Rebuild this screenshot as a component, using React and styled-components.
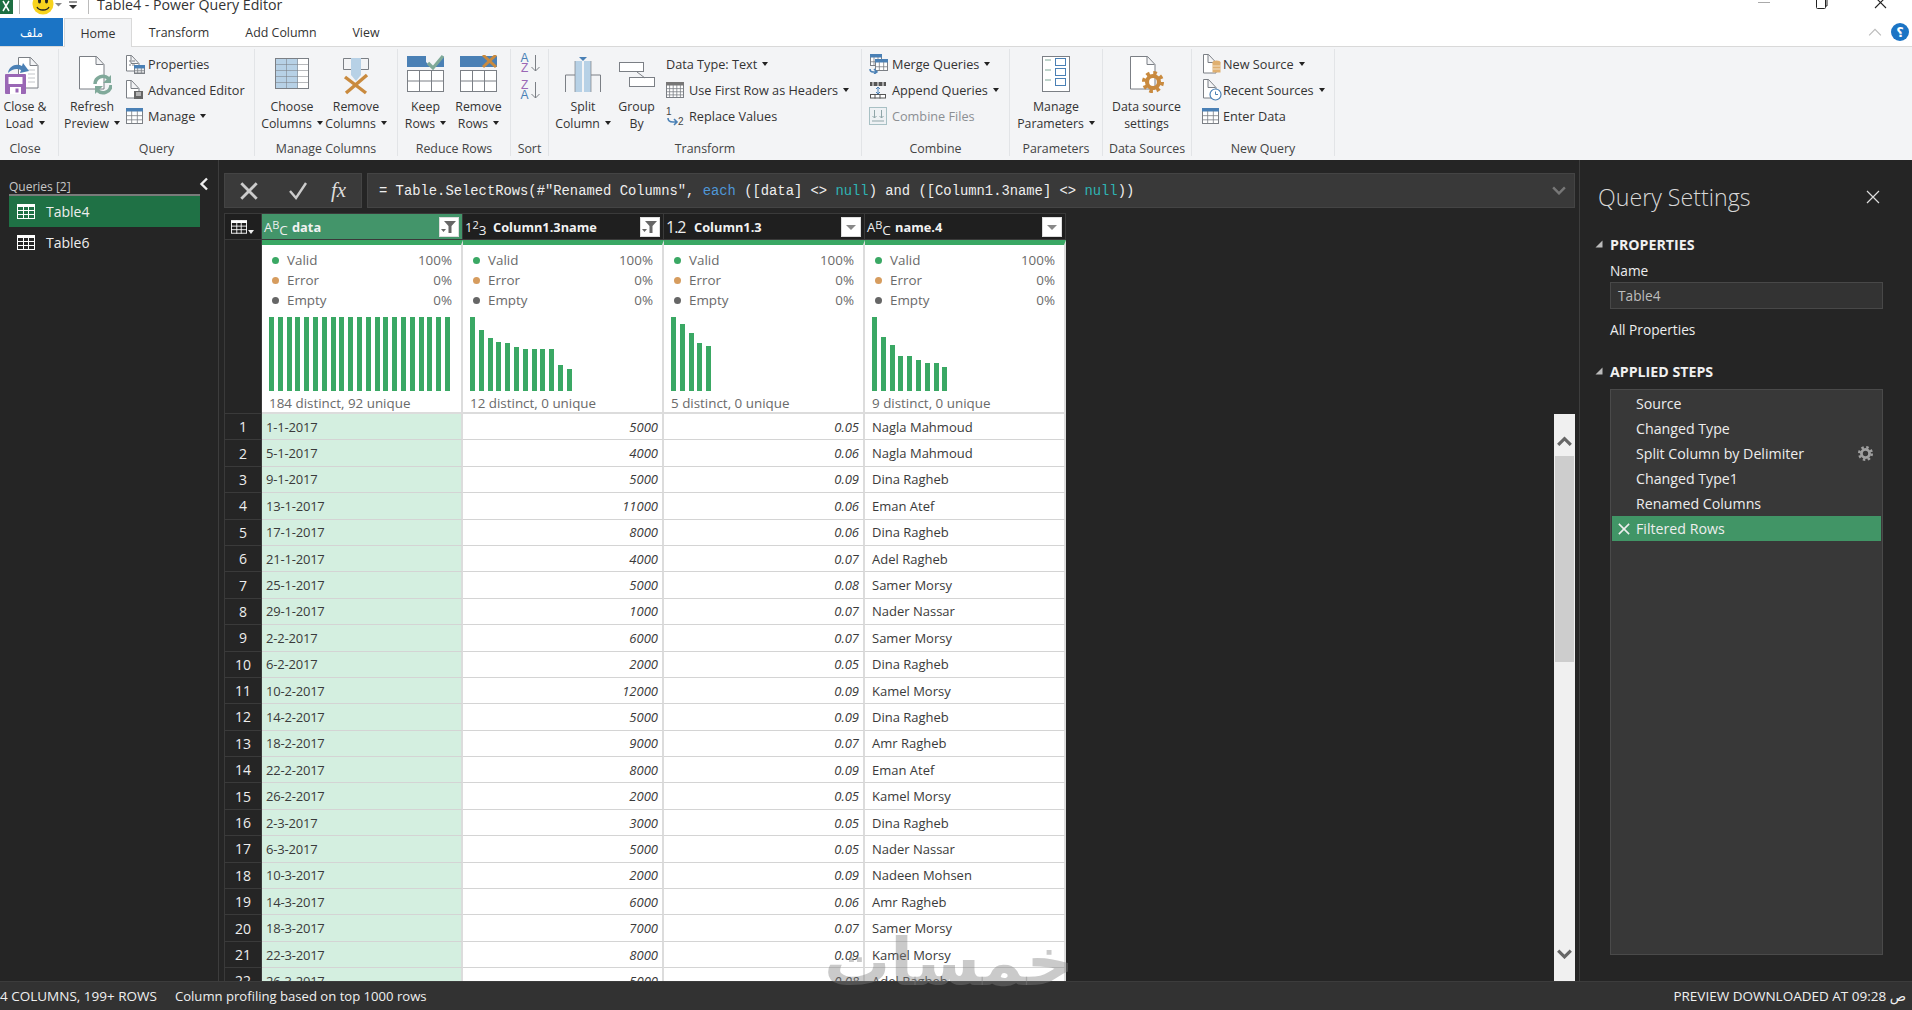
import React from "react";
import styled, { createGlobalStyle } from "styled-components";

const UI = `"Open Sans", "DejaVu Sans", sans-serif`;

const GlobalStyle = createGlobalStyle`
  html, body {
    margin: 0;
    padding: 0;
    background: #252525;
    overflow: hidden;
  }
  * { box-sizing: border-box; }
`;

const rows = [
  ["1-1-2017", 5000, "0.05", "Nagla Mahmoud"],
  ["5-1-2017", 4000, "0.06", "Nagla Mahmoud"],
  ["9-1-2017", 5000, "0.09", "Dina Ragheb"],
  ["13-1-2017", 11000, "0.06", "Eman Atef"],
  ["17-1-2017", 8000, "0.06", "Dina Ragheb"],
  ["21-1-2017", 4000, "0.07", "Adel Ragheb"],
  ["25-1-2017", 5000, "0.08", "Samer Morsy"],
  ["29-1-2017", 1000, "0.07", "Nader Nassar"],
  ["2-2-2017", 6000, "0.07", "Samer Morsy"],
  ["6-2-2017", 2000, "0.05", "Dina Ragheb"],
  ["10-2-2017", 12000, "0.09", "Kamel Morsy"],
  ["14-2-2017", 5000, "0.09", "Dina Ragheb"],
  ["18-2-2017", 9000, "0.07", "Amr Ragheb"],
  ["22-2-2017", 8000, "0.09", "Eman Atef"],
  ["26-2-2017", 2000, "0.05", "Kamel Morsy"],
  ["2-3-2017", 3000, "0.05", "Dina Ragheb"],
  ["6-3-2017", 5000, "0.05", "Nader Nassar"],
  ["10-3-2017", 2000, "0.09", "Nadeen Mohsen"],
  ["14-3-2017", 6000, "0.06", "Amr Ragheb"],
  ["18-3-2017", 7000, "0.07", "Samer Morsy"],
  ["22-3-2017", 8000, "0.09", "Kamel Morsy"],
  ["26-3-2017", 5000, "0.08", "Adel Ragheb"],
];

const columns = [
  { name: "data", type: "abc", filtered: true, active: true, distinct: "184 distinct, 92 unique", bars: Array(21).fill(74) },
  { name: "Column1.3name", type: "123", filtered: true, distinct: "12 distinct, 0 unique", bars: [74, 61, 53, 49, 48, 44, 42, 42, 42, 42, 26, 22] },
  { name: "Column1.3", type: "1.2", distinct: "5 distinct, 0 unique", bars: [74, 67, 58, 48, 45] },
  { name: "name.4", type: "abc", distinct: "9 distinct, 0 unique", bars: [74, 54, 46, 35, 35, 31, 28, 28, 24] },
];

const steps = ["Source", "Changed Type", "Split Column by Delimiter", "Changed Type1", "Renamed Columns", "Filtered Rows"];

/* ---------- layout ---------- */

const Page = styled.div`
  position: relative;
  width: 1912px;
  height: 1010px;
  display: grid;
  grid-template-rows: 18px 29px 113px 821px 29px;
  font-family: ${UI};
  overflow: hidden;
`;

const TitleBar = styled.div`
  background: #fff;
  display: flex;
  align-items: center;
  overflow: hidden;
  height: 18px;
`;
const TitleText = styled.div`
  font-size: 14.2px;
  line-height: 18px;
  color: #333;
  margin: -8px 0 0 8px;
  white-space: nowrap;
`;
const TitleRule = styled.div`
  width: 1px;
  height: 14px;
  background: #bbb;
  margin: -4px 0 0 ${(p) => p.$left}px;
`;
const TitleSvg = styled.svg`
  flex: none;
  margin: ${(p) => p.$margin || 0};
`;
const WindowButtons = styled.div`
  margin-left: auto;
  display: flex;
  align-self: flex-start;
  gap: 46px;
  padding-right: 25px;
`;

const TabRow = styled.div`
  background: #fff;
  display: flex;
  align-items: stretch;
  border-bottom: 1px solid #d9d9d9;
`;
const FileTab = styled.div`
  width: 63px;
  background: #1b74c5;
  color: #fff;
  font-size: 12px;
  display: flex;
  align-items: center;
  justify-content: center;
`;
const Tab = styled.div`
  width: ${(p) => p.$w}px;
  font-size: 12.4px;
  color: #333;
  display: flex;
  align-items: center;
  justify-content: center;
  ${(p) =>
    p.$active &&
    `background:#f3f4f6;margin:0 0 -1px 1px;border:1px solid #d9d9d9;border-bottom:0;`}
`;
const TabRight = styled.div`
  margin-left: auto;
  display: flex;
  align-items: center;
  gap: 9px;
  padding-right: 3px;
`;
const HelpBadge = styled.div`
  width: 18px;
  height: 18px;
  border-radius: 50%;
  background: #1b74c5;
  color: #fff;
  font-size: 13px;
  font-weight: 700;
  line-height: 18px;
  text-align: center;
`;

const Ribbon = styled.div`
  background: #f3f4f6;
  display: flex;
  align-items: flex-start;
  padding-top: 2px;
`;
const Group = styled.div`
  width: ${(p) => p.$w}px;
  height: 107px;
  border-right: 1px solid #e2e4e7;
  display: flex;
  flex-direction: column;
`;
const GroupBody = styled.div`
  height: 92px;
  display: flex;
  align-items: flex-start;
  gap: ${(p) => p.$gap || 0}px;
  padding-left: ${(p) => p.$pad || 0}px;
`;
const GroupLabel = styled.div`
  height: 15px;
  width: ${(p) => (p.$w ? `${p.$w}px` : "auto")};
  line-height: 15px;
  font-size: 12.4px;
  color: #444;
  text-align: center;
  white-space: nowrap;
`;
const LargeButton = styled.div`
  width: ${(p) => p.$w}px;
  display: flex;
  flex-direction: column;
  align-items: center;
  padding-top: 6px;
`;
const LargeIcon = styled.div`
  height: 43px;
  display: flex;
  align-items: flex-start;
  justify-content: center;
`;
const LargeText = styled.div`
  font-size: 12.3px;
  line-height: 17px;
  color: #333;
  text-align: center;
  white-space: nowrap;
`;
const Stack = styled.div`
  padding-top: ${(p) => p.$top ?? 2}px;
  margin-left: ${(p) => p.$left || 0}px;
`;
const SmallButton = styled.div`
  height: 26.2px;
  display: flex;
  align-items: center;
  font-size: 12.7px;
  white-space: nowrap;
  color: ${(p) => (p.$disabled ? "#8b8f93" : "#333")};
`;
const SmallIcon = styled.div`
  width: ${(p) => p.$w}px;
  display: flex;
  align-items: center;
`;
const Caret = styled.span`
  display: inline-block;
  width: 0;
  height: 0;
  margin-left: 5px;
  vertical-align: 3px;
  border-left: 3.5px solid transparent;
  border-right: 3.5px solid transparent;
  border-top: 4px solid #222;
`;

const Main = styled.div`
  background: #252525;
  display: grid;
  grid-template-columns: 219px 1361px 332px;
  overflow: hidden;
`;

/* ---------- queries pane ---------- */

const QueriesPane = styled.div`
  border-right: 1px solid #3d3d3d;
  padding: 19px 18px 0 9px;
`;
const QueriesHead = styled.div`
  position: relative;
  height: 17px;
  font-size: 12px;
  line-height: 16px;
  color: #c8c8c8;
  border-bottom: 2px solid #7a7a7a;
`;
const CollapseArrow = styled.svg`
  position: absolute;
  right: -9px;
  top: -2px;
`;
const QueryItem = styled.div`
  height: ${(p) => (p.$active ? 31 : 30)}px;
  display: flex;
  align-items: center;
  gap: 11px;
  padding-left: 8px;
  font-size: 14px;
  color: #eee;
  background: ${(p) => (p.$active ? "#1f7145" : "transparent")};
`;

/* ---------- centre ---------- */

const Centre = styled.div`
  padding: 13px 5px 0;
  display: flex;
  flex-direction: column;
  min-height: 0;
`;
const FormulaRow = styled.div`
  height: 35px;
  flex: none;
  display: flex;
  gap: 5px;
`;
const FormulaButtons = styled.div`
  width: 138px;
  background: #3a3a3a;
  border: 1px solid #444;
  display: flex;
  align-items: center;
  padding-left: 15px;
`;
const CheckMark = styled.svg`
  margin-left: 30px;
`;
const FxLabel = styled.span`
  font-family: "Liberation Serif", serif;
  font-style: italic;
  font-size: 21px;
  color: #ddd;
  margin-left: 23px;
`;
const FormulaBox = styled.div`
  flex: 1;
  background: #393939;
  border: 1px solid #444;
  display: flex;
  align-items: center;
  justify-content: space-between;
  padding: 0 8px 0 11px;
  font-family: "Liberation Mono", monospace;
  font-size: 13.83px;
  color: #eee;
  white-space: pre;
`;
const Kw = styled.span`
  color: ${(p) => p.$c};
`;
const ContentRow = styled.div`
  flex: 1;
  min-height: 0;
  margin-top: 5px;
  display: flex;
  justify-content: space-between;
  overflow: hidden;
`;
const DataGrid = styled.div`
  width: 843px;
  height: 768px;
  display: grid;
  grid-template-columns: 38px repeat(4, 201px);
  grid-template-rows: 27px 174px;
  grid-auto-rows: 26.4px;
  background: #252525;
`;
const Corner = styled.div`
  background: #1f1f1f;
  border: 1px solid #3a3a3a;
  display: flex;
  align-items: center;
  gap: 1px;
  padding-left: 6px;
`;
const CornerCaret = styled.span`
  width: 0;
  height: 0;
  margin-top: 10px;
  border-left: 3.5px solid transparent;
  border-right: 3.5px solid transparent;
  border-top: 4px solid #eee;
`;
const HeadCell = styled.div`
  background: ${(p) => (p.$active ? "#43956a" : "#1f1f1f")};
  border-top: 1px solid #3a3a3a;
  border-bottom: 1px solid #3a3a3a;
  border-right: 1px solid #3a3a3a;
  display: flex;
  align-items: center;
  padding: 0 3px 0 2px;
  color: #f2f2f2;
  font-size: 12.8px;
  font-weight: 700;
`;
const TypeIcon = styled.span`
  width: 28px;
  flex: none;
  font-size: ${(p) => p.$size || 13}px;
  letter-spacing: ${(p) => p.$track || 0}px;
  font-weight: 400;
  color: #eee;
  white-space: nowrap;
`;
const TypeSub = styled.span`
  position: relative;
  top: ${(p) => p.$dy}px;
  font-size: ${(p) => p.$size || 13.5}px;
`;
const HeadName = styled.span`
  flex: 1;
  white-space: nowrap;
`;
const FilterButton = styled.span`
  width: 20px;
  height: 20px;
  background: #fff;
  border: 1px solid #ddd;
  display: flex;
  align-items: center;
  justify-content: center;
`;
const ProfileGutter = styled.div`
  background: #252525;
  border: 1px solid #3a3a3a;
  border-top: 0;
`;
const ProfileCell = styled.div`
  background: #fff;
  border-top: 5px solid #3aa864;
  border-right: 2px solid #dcdcdc;
  border-bottom: 2px solid #dcdcdc;
  padding: 5px 9px 0 7px;
  display: flex;
  flex-direction: column;
  color: #6a6a6a;
  font-size: 13.4px;
`;
const StatRow = styled.div`
  height: 20px;
  flex: none;
  display: flex;
  align-items: center;
  padding-left: 3px;
`;
const Dot = styled.span`
  width: 7px;
  height: 7px;
  border-radius: 50%;
  background: ${(p) => p.$c};
  margin-right: 8px;
`;
const StatPct = styled.span`
  margin-left: auto;
`;
const Bars = styled.div`
  height: 74px;
  flex: none;
  margin-top: 7px;
  display: flex;
  align-items: flex-end;
  gap: 3.8px;
`;
const Bar = styled.div`
  width: 5px;
  flex: none;
  background: #3aa864;
`;
const Distinct = styled.div`
  margin-top: 3px;
  line-height: 18px;
  white-space: nowrap;
`;
const RowNumber = styled.div`
  background: #252525;
  border: 1px solid #3a3a3a;
  border-top: 0;
  color: #eee;
  font-size: 14px;
  display: flex;
  align-items: center;
  justify-content: center;
`;
const Cell = styled.div`
  background: ${(p) => (p.$active ? "#d4efe0" : "#fff")};
  border-right: 2px solid #dcdcdc;
  border-bottom: 1px solid #d4d4d4;
  color: #3a3a3a;
  font-size: 13px;
  letter-spacing: ${(p) => (p.$active ? "-0.2px" : "0")};
  font-style: ${(p) => (p.$num ? "italic" : "normal")};
  padding: 0 ${(p) => (p.$num ? 4 : 3)}px 0 ${(p) => (p.$pad ? p.$pad : 4)}px;
  display: flex;
  align-items: center;
  justify-content: ${(p) => (p.$num ? "flex-end" : "flex-start")};
  white-space: nowrap;
`;
const Scrollbar = styled.div`
  width: 21px;
  height: 567px;
  margin-top: 201px;
  background: #f0f0f0;
  display: flex;
  flex-direction: column;
`;
const ScrollEnd = styled.div`
  height: ${(p) => p.$h}px;
  flex: none;
  display: flex;
  align-items: ${(p) => (p.$bottom ? "flex-end" : "center")};
  justify-content: center;
  padding: ${(p) => (p.$bottom ? "0 0 22px" : "12px 0 0")};
`;
const ScrollThumb = styled.div`
  height: 206px;
  flex: none;
  background: #cdcdcd;
  margin: 0 1px;
`;

/* ---------- settings ---------- */

const Settings = styled.div`
  border-left: 1px solid #3d3d3d;
  margin-left: -1px;
  padding: 0 29px 0 18px;
  color: #eee;
`;
const SettingsHead = styled.div`
  height: 74px;
  display: flex;
  align-items: center;
  justify-content: space-between;
  padding-right: 3px;
`;
const SettingsTitle = styled.div`
  font-size: 23.2px;
  font-weight: 300;
  color: #d8d8d8;
`;
const SectionTitle = styled.div`
  display: flex;
  align-items: center;
  gap: 7px;
  height: 20px;
  margin: ${(p) => p.$top || 0}px 0 0 -3px;
  font-size: 14.2px;
  font-weight: 700;
  color: #f0f0f0;
`;
const SectionBody = styled.div`
  padding-left: 12px;
`;
const FieldLabel = styled.div`
  margin-top: 8px;
  height: 17px;
  line-height: 17px;
  font-size: 13.7px;
`;
const NameInput = styled.div`
  margin-top: 3px;
  height: 27px;
  background: #333;
  border: 1px solid #484848;
  color: #bdbdbd;
  font-size: 13.7px;
  line-height: 25px;
  padding-left: 7px;
`;
const AllProperties = styled.div`
  margin-top: 11px;
  height: 20px;
  line-height: 20px;
  font-size: 13.7px;
`;
const StepList = styled.div`
  margin-top: 8px;
  height: 566px;
  background: #383838;
  border: 1px solid #4a4a4a;
  padding: 1px 1px 0;
`;
const StepRow = styled.div`
  height: 25px;
  display: flex;
  align-items: center;
  padding-left: 6px;
  font-size: 14.2px;
  color: #eee;
  background: ${(p) => (p.$active ? "#419566" : "transparent")};
`;
const StepMark = styled.span`
  width: 18px;
  flex: none;
  display: flex;
`;
const StepGear = styled.span`
  margin-left: auto;
  padding-right: 8px;
  display: flex;
`;

/* ---------- status ---------- */

const StatusBar = styled.div`
  background: #323232;
  border-top: 1px solid #3c3c3c;
  display: flex;
  align-items: center;
  padding: 0 6px 0 0;
  color: #f0f0f0;
  font-size: 13.5px;
  white-space: nowrap;
`;
const StatusGap = styled.span`
  margin-left: 18px;
  font-size: 13.1px;
`;
const StatusRight = styled.span`
  margin-left: auto;
`;
const Watermark = styled.div`
  position: absolute;
  left: 842px;
  top: 923px;
  width: 232px;
  height: 80px;
  font-family: "DejaVu Sans", sans-serif;
  font-weight: 700;
  font-size: 66px;
  line-height: 80px;
  text-align: center;
  color: rgba(128, 128, 128, 0.42);
  white-space: nowrap;
  direction: rtl;
  pointer-events: none;
`;

/* ---------- icons ---------- */

const G = "#7b7f85";
const BLUE = "#4a80b5";
const LB = "#b7d1e6";
const OR = "#c98a3e";

const Doc = ({ x = 0, y = 0, w = 25, h = 33, c = G }) => (
  <path
    d={`M${x + 0.5} ${y + 0.5}h${w - 8}l${7.5} 8v${h - 8.5}h-${w - 0.5}zM${x + w - 8} ${y + 0.5}v8h7.5`}
    fill="#fff"
    stroke={c}
  />
);

const MiniTable = ({ x = 0, y = 0, w = 17, h = 15, head = BLUE, cols = 3, rws = 3 }) => (
  <g>
    <rect x={x + 0.5} y={y + 0.5} width={w - 1} height={h - 1} fill="#fff" stroke={G} />
    <rect x={x} y={y} width={w} height={3.5} fill={head} />
    {Array.from({ length: cols - 1 }, (_, i) => (
      <path key={i} d={`M${x + ((i + 1) * w) / cols} ${y + 3}V${y + h}`} stroke={G} strokeWidth="0.8" />
    ))}
    {Array.from({ length: rws - 1 }, (_, i) => (
      <path key={i} d={`M${x} ${y + 3.5 + ((i + 1) * (h - 3.5)) / rws}H${x + w}`} stroke={G} strokeWidth="0.8" />
    ))}
  </g>
);

const Gear = ({ size, c, x, y }) => (
  <svg x={x} y={y} width={size} height={size} viewBox="0 0 24 24">
    <circle cx="12" cy="12" r="10" fill="none" stroke={c} strokeWidth="4" strokeDasharray="3.9 3.95" />
    <circle cx="12" cy="12" r="6.5" fill="none" stroke={c} strokeWidth="4.5" />
  </svg>
);

const CloseLoadIcon = () => (
  <svg width="40" height="40" viewBox="0 0 40 40">
    <Doc x={13} y={2} w={20} h={31} />
    <path d="M23 15h7M23 19h7M23 23h7M23 27h7" stroke="#c3c6ca" />
    <path d="M3 18c1-7 8-10 14-7l1-3 6 8-9 2 1-3c-4-2-9-1-13 3z" fill={BLUE} />
    <rect x="0" y="19" width="21" height="20" rx="1" fill="#9a67b5" />
    <rect x="3.500" y="22" width="14" height="7" fill="#fff" />
    <rect x="5" y="32" width="11" height="7" fill="#fff" />
    <rect x="10.500" y="33.500" width="3" height="4" fill="#9a67b5" />
  </svg>
);

const RefreshIcon = () => (
  <svg width="40" height="40" viewBox="0 0 40 40">
    <Doc x={7} y={1} w={25} h={33} />
    <path d="M23 29a8 8 0 0 1 13.500-5.500" fill="none" stroke="#80a99a" strokeWidth="3.500" />
    <path d="M39 20v8h-8z" fill="#80a99a" />
    <path d="M39 30a8 8 0 0 1-13.500 5.500" fill="none" stroke="#80a99a" strokeWidth="3.500" />
    <path d="M23 39v-8h8z" fill="#80a99a" />
  </svg>
);

const ChooseColumnsIcon = () => (
  <svg width="36" height="36" viewBox="0 0 36 36">
    <rect x="1.500" y="3.500" width="33" height="30" fill="#fff" stroke={G} />
    <rect x="2" y="4" width="22" height="29" fill={LB} />
    <path d="M12.500 3.500v30M23.500 3.500v30M1.500 9.500h33M1.500 15.500h33M1.500 21.500h33M1.500 27.500h33" stroke={G} strokeOpacity="0.55" />
  </svg>
);

const RemoveColumnsIcon = () => (
  <svg width="30" height="40" viewBox="0 0 30 40">
    <path d="M10 3.500H2.500v11H10M20 3.500h7.500v11H20" fill="none" stroke={G} />
    <path d="M10 3h10v17l-5 6-5-6z" fill={LB} />
    <path d="M4 22l21 16M26 20L5 38" stroke={OR} strokeWidth="3.400" />
  </svg>
);

const RowsIcon = ({ mark }) => (
  <svg width="38" height="38" viewBox="0 0 38 38">
    <rect x="0" y="1" width="37" height="11" fill={BLUE} />
    <rect x="0.500" y="15.500" width="36" height="21" fill="#fff" stroke={G} />
    <path d="M12.500 15.500v21M24.500 15.500v21M0.500 26h36" stroke={G} />
    {mark === "keep" ? (
      <>
        <path d="M19 7l7 7L37 1v-1H19z" fill="#f3f4f6" />
        <path d="M21 8l5 5L36 1" fill="none" stroke="#7fa998" strokeWidth="3.200" />
      </>
    ) : (
      <>
        <path d="M22 0h16v13H22z" fill="#f3f4f6" />
        <rect x="22" y="1" width="15" height="11" fill={BLUE} />
        <path d="M23 0l13 12M36 0L23 12" stroke={OR} strokeWidth="3" />
      </>
    )}
  </svg>
);

const SortIcon = () => (
  <svg width="22" height="48" viewBox="0 0 22 48">
    <text x="0.500" y="9" fontFamily="Liberation Sans" fontSize="12" fill={BLUE}>A</text>
    <text x="1" y="19" fontFamily="Liberation Sans" fontSize="12" fill="#9a67b5">Z</text>
    <path d="M15.500 2v16M11.500 14l4 4 4-4" fill="none" stroke={G} />
    <text x="1" y="36" fontFamily="Liberation Sans" fontSize="12" fill="#9a67b5">Z</text>
    <text x="0.500" y="46" fontFamily="Liberation Sans" fontSize="12" fill={BLUE}>A</text>
    <path d="M15.500 29v16M11.500 41l4 4 4-4" fill="none" stroke={G} />
  </svg>
);

const SplitIcon = () => (
  <svg width="38" height="40" viewBox="0 0 38 40">
    <path d="M11 20H1.500v17M27 20h9.500v17" fill="none" stroke={G} />
    <rect x="11" y="6" width="7" height="31" fill={LB} />
    <rect x="20" y="6" width="7" height="31" fill={LB} />
    <path d="M11 6v31M27 6v31" stroke={G} strokeWidth="0.700" />
    <path d="M15 2h8l-4 4z" fill={BLUE} />
  </svg>
);

const GroupByIcon = () => (
  <svg width="38" height="40" viewBox="0 0 38 40">
    <rect x="1.500" y="7.500" width="24" height="9" fill="#fff" stroke={G} />
    <rect x="11.500" y="22.500" width="25" height="9" fill="#fff" stroke={G} />
    <path d="M19 17l8 6" stroke={G} />
  </svg>
);

const ParamsIcon = () => (
  <svg width="30" height="40" viewBox="0 0 30 40">
    <rect x="1.500" y="1.500" width="27" height="35" fill="#fff" stroke={G} />
    {[7, 17, 27].map((y) => (
      <g key={y}>
        <path d={`M4 ${y - 2}h6`} stroke="#7fa998" />
        <rect x="14.500" y={y - 3.500} width="10" height="7" fill="#fff" stroke={BLUE} />
      </g>
    ))}
  </svg>
);

const DataSourceIcon = () => (
  <svg width="36" height="40" viewBox="0 0 36 40">
    <Doc x={1} y={1} w={25} h={33} />
    <Gear x={13} y={16} size={22} c={OR} />
  </svg>
);

const PropertiesIcon = () => (
  <svg width="20" height="19" viewBox="0 0 20 19">
    <Doc x={0} y={0} w={13} h={16} />
    <path d="M3 6h2M6 6h3M3 10h2M6 10h3" stroke={G} />
    <MiniTable x={8} y={10} w={11} h={9} />
  </svg>
);

const EditorIcon = () => (
  <svg width="18" height="20" viewBox="0 0 18 20">
    <Doc x={0} y={0} w={13} h={18} />
    <rect x="8" y="11" width="9" height="8" fill="#666" />
    <path d="M10 13h5M10 15h5" stroke="#fff" />
  </svg>
);

const ReplaceIcon = () => (
  <svg width="20" height="20" viewBox="0 0 20 20">
    <text x="0" y="9" fontFamily="Liberation Sans" fontSize="10" fill="#444">1</text>
    <text x="12" y="19" fontFamily="Liberation Sans" fontSize="10" fill="#444">2</text>
    <path d="M2 12c0 3 2 4 5 4h3M8 13l3 3-3 3" fill="none" stroke={BLUE} strokeWidth="1.600" />
  </svg>
);

const MergeIcon = () => (
  <svg width="20" height="20" viewBox="0 0 20 20">
    <MiniTable x={1} y={0} w={12} h={12} cols={3} rws={2} />
    <MiniTable x={6} y={5} w={13} h={12} cols={3} rws={2} />
    <path d="M1 15c0 2 1 3 3 3h3M5 15l3 3-3 2" fill="none" stroke={BLUE} strokeWidth="1.500" />
  </svg>
);

const AppendIcon = () => (
  <svg width="18" height="18" viewBox="0 0 18 18">
    <rect x="1" y="1" width="16" height="4" fill="#555" />
    <path d="M4 1v4M9 1v4M14 1v4" stroke="#fff" />
    <rect x="1.500" y="13.500" width="15" height="3.500" fill="#fff" stroke="#555" />
    <path d="M6 13.500v4M11 13.500v4" stroke="#555" />
    <path d="M9 6v7M7 8l2-2 2 2M7 11l2 2 2-2" fill="none" stroke={BLUE} />
  </svg>
);

const CombineIcon = () => (
  <svg width="18" height="18" viewBox="0 0 18 18">
    <rect x="0.500" y="0.500" width="17" height="17" fill="#eef1f4" stroke="#a8c0c4" />
    <path d="M5.500 3v8M3.500 9l2 2 2-2M12.500 3v8M10.500 9l2 2 2-2M3 14h12" fill="none" stroke="#8fa5a8" />
  </svg>
);

const NewSourceIcon = () => (
  <svg width="20" height="20" viewBox="0 0 20 20">
    <Doc x={1} y={0} w={13} h={19} />
    <ellipse cx="14.500" cy="8.500" rx="4" ry="2" fill="#e0b070" />
    <rect x="10.500" y="8.500" width="8" height="10" fill="#e0b070" />
    <path d="M10.500 12h8M10.500 15h8" stroke="#f3e2c9" />
  </svg>
);

const RecentIcon = () => (
  <svg width="20" height="22" viewBox="0 0 20 22">
    <Doc x={1} y={0} w={13} h={19} />
    <circle cx="13.500" cy="15.500" r="5.500" fill="#fff" stroke={BLUE} strokeWidth="1.200" />
    <path d="M13.500 12.500v3h2.500" fill="none" stroke={BLUE} />
  </svg>
);

const GridGlyph = ({ w = 18, h = 15, c = "#fff" }) => (
  <svg width={w} height={h} viewBox="0 0 18 15">
    <rect x="0.500" y="0.500" width="17" height="14" fill="none" stroke={c} />
    <rect x="0" y="0" width="18" height="3" fill={c} />
    <path d="M6.500 0v15M11.500 0v15M0 6.500h18M0 10.500h18" stroke={c} />
  </svg>
);

const FilterGlyph = ({ on }) => (
  <svg width="16" height="14" viewBox="0 0 16 14">
    {on ? (
      <>
        <path d="M3 1h12l-4.500 5v7h-3V6z" fill="#666" />
        <path d="M0 9h5l-2.500 3z" fill="#666" />
      </>
    ) : (
      <path d="M3 5h10l-5 5z" fill="#888" />
    )}
  </svg>
);

const Chevron = ({ up, c = "#666", w = 14, sw = 3 }) => (
  <svg width={w} height={w * 0.7} viewBox="0 0 14 10">
    <path d={up ? "M1 8.500l6-6 6 6" : "M1 1.500l6 6 6-6"} fill="none" stroke={c} strokeWidth={sw} />
  </svg>
);

const Disclosure = () => (
  <svg width="8" height="8" viewBox="0 0 8 8">
    <path d="M7.500 0.500v7h-7z" fill="#bbb" />
  </svg>
);

const TitleIcons = () => (
  <>
    <TitleSvg width="14" height="14" viewBox="0 0 14 14" $margin="-4px 0 0">
      <rect width="13" height="14" fill="#1d6f42" />
      <path d="M3 1l6 10M9 1L3 11" stroke="#fff" strokeWidth="1.500" />
    </TitleSvg>
    <TitleRule $left={5} />
    <TitleSvg width="22" height="18" viewBox="0 0 22 18" $margin="0 0 0 12px">
      <circle cx="11" cy="4" r="10.500" fill="#f7d31e" />
      <ellipse cx="7.500" cy="1" rx="1.500" ry="2.500" fill="#222" />
      <ellipse cx="14.500" cy="1" rx="1.500" ry="2.500" fill="#222" />
      <path d="M5 7c2 4 10 4 12 0" fill="none" stroke="#222" strokeWidth="1.300" />
    </TitleSvg>
    <TitleSvg width="34" height="18" viewBox="0 0 34 18">
      <path d="M1 3h7l-3.500 3.500z" fill="#888" />
      <path d="M15 2h8" stroke="#333" />
      <path d="M15 5h8l-4 4z" fill="#333" />
    </TitleSvg>
    <TitleRule $left={0} />
  </>
);

const WindowIcons = () => (
  <WindowButtons>
    <svg width="12" height="4" viewBox="0 0 12 4"><path d="M0 2.500h12" stroke="#aaa" /></svg>
    <svg width="12" height="9" viewBox="0 0 12 9">
      <path d="M3 0v-1h8v7h-1" fill="none" stroke="#222" />
      <rect x="0.500" y="-1" width="9" height="9.500" rx="1" fill="none" stroke="#222" />
    </svg>
    <svg width="13" height="9" viewBox="0 0 13 9"><path d="M1-3l11 11M12-3L1 8" stroke="#222" strokeWidth="1.100" /></svg>
  </WindowButtons>
);

const Cross = ({ size, c = "#ccc", sw = 1.2 }) => (
  <svg width={size} height={size} viewBox="0 0 14 14">
    <path d="M1 1l12 12M13 1L1 13" stroke={c} strokeWidth={sw} fill="none" />
  </svg>
);

const TypeMark = ({ type }) => {
  if (type === "abc")
    return (
      <TypeIcon>
        A<TypeSub $dy={-3} $size={11}>B</TypeSub><TypeSub $dy={3}>C</TypeSub>
      </TypeIcon>
    );
  if (type === "123")
    return (
      <TypeIcon>
        1<TypeSub $dy={-3} $size={11}>2</TypeSub><TypeSub $dy={3}>3</TypeSub>
      </TypeIcon>
    );
  return <TypeIcon $size={16} $track={-1}>1.2</TypeIcon>;
};

const Label = ({ children, caret }) => (
  <>
    {children}
    {caret && <Caret />}
  </>
);

const Large = ({ w, icon, line1, line2, caret }) => (
  <LargeButton $w={w}>
    <LargeIcon>{icon}</LargeIcon>
    <LargeText>
      {line1}
      <br />
      <Label caret={caret}>{line2}</Label>
    </LargeText>
  </LargeButton>
);

const Small = ({ iw, icon, text, caret, disabled }) => (
  <SmallButton $disabled={disabled}>
    {iw && <SmallIcon $w={iw}>{icon}</SmallIcon>}
    <Label caret={caret}>{text}</Label>
  </SmallButton>
);

const ManageTableIcon = () => (
  <svg width="17" height="16" viewBox="0 0 17 16">
    <MiniTable x={0} y={0} w={17} h={16} />
  </svg>
);

const HeaderTableIcon = () => (
  <svg width="18" height="16" viewBox="0 0 18 16">
    <MiniTable x={0} y={0} w={18} h={16} cols={5} rws={4} head="#777" />
  </svg>
);

export default function App() {
  return (
    <>
      <GlobalStyle />
      <Page>
        <TitleBar>
          <TitleIcons />
          <TitleText>Table4 - Power Query Editor</TitleText>
          <WindowIcons />
        </TitleBar>

        <TabRow>
          <FileTab>ملف</FileTab>
          <Tab $active $w={68}>Home</Tab>
          <Tab $w={94}>Transform</Tab>
          <Tab $w={110}>Add Column</Tab>
          <Tab $w={60}>View</Tab>
          <TabRight>
            <Chevron up c="#bbb" w={14} sw={1.2} />
            <HelpBadge>؟</HelpBadge>
          </TabRight>
        </TabRow>

        <Ribbon>
          <Group $w={59}>
            <GroupBody>
              <Large w={50} icon={<CloseLoadIcon />} line1="Close &" line2="Load" caret />
            </GroupBody>
            <GroupLabel $w={50}>Close</GroupLabel>
          </Group>
          <Group $w={196}>
            <GroupBody>
              <Large w={66} icon={<RefreshIcon />} line1="Refresh" line2="Preview" caret />
              <Stack $left={1}>
                <Small iw={22} icon={<PropertiesIcon />} text="Properties" />
                <Small iw={22} icon={<EditorIcon />} text="Advanced Editor" />
                <Small iw={22} icon={<ManageTableIcon />} text="Manage" caret />
              </Stack>
            </GroupBody>
            <GroupLabel>Query</GroupLabel>
          </Group>
          <Group $w={143}>
            <GroupBody $pad={5}>
              <Large w={64} icon={<ChooseColumnsIcon />} line1="Choose" line2="Columns" caret />
              <Large w={64} icon={<RemoveColumnsIcon />} line1="Remove" line2="Columns" caret />
            </GroupBody>
            <GroupLabel>Manage Columns</GroupLabel>
          </Group>
          <Group $w={113}>
            <GroupBody $pad={1}>
              <Large w={53} icon={<RowsIcon mark="keep" />} line1="Keep" line2="Rows" caret />
              <Large w={53} icon={<RowsIcon mark="remove" />} line1="Remove" line2="Rows" caret />
            </GroupBody>
            <GroupLabel>Reduce Rows</GroupLabel>
          </Group>
          <Group $w={38}>
            <GroupBody $pad={9}>
              <Stack $top={4}>
                <SortIcon />
              </Stack>
            </GroupBody>
            <GroupLabel>Sort</GroupLabel>
          </Group>
          <Group $w={313}>
            <GroupBody $pad={9}>
              <Large w={50} icon={<SplitIcon />} line1="Split" line2="Column" caret />
              <Large w={57} icon={<GroupByIcon />} line1="Group" line2="By" />
              <Stack $left={1}>
                <Small text="Data Type: Text" caret />
                <Small iw={23} icon={<HeaderTableIcon />} text="Use First Row as Headers" caret />
                <Small iw={23} icon={<ReplaceIcon />} text="Replace Values" />
              </Stack>
            </GroupBody>
            <GroupLabel>Transform</GroupLabel>
          </Group>
          <Group $w={148}>
            <GroupBody $pad={7}>
              <Stack>
                <Small iw={23} icon={<MergeIcon />} text="Merge Queries" caret />
                <Small iw={23} icon={<AppendIcon />} text="Append Queries" caret />
                <Small iw={23} icon={<CombineIcon />} text="Combine Files" disabled />
              </Stack>
            </GroupBody>
            <GroupLabel>Combine</GroupLabel>
          </Group>
          <Group $w={93}>
            <GroupBody>
              <Large w={92} icon={<ParamsIcon />} line1="Manage" line2="Parameters" caret />
            </GroupBody>
            <GroupLabel>Parameters</GroupLabel>
          </Group>
          <Group $w={89}>
            <GroupBody>
              <Large w={87} icon={<DataSourceIcon />} line1="Data source" line2="settings" />
            </GroupBody>
            <GroupLabel>Data Sources</GroupLabel>
          </Group>
          <Group $w={143}>
            <GroupBody $pad={10}>
              <Stack>
                <Small iw={21} icon={<NewSourceIcon />} text="New Source" caret />
                <Small iw={21} icon={<RecentIcon />} text="Recent Sources" caret />
                <Small iw={21} icon={<ManageTableIcon />} text="Enter Data" />
              </Stack>
            </GroupBody>
            <GroupLabel>New Query</GroupLabel>
          </Group>
        </Ribbon>

        <Main>
          <QueriesPane>
            <QueriesHead>
              Queries [2]
              <CollapseArrow width="10" height="14" viewBox="0 0 10 14">
                <path d="M8 1.500L2.500 7 8 12.500" fill="none" stroke="#eee" strokeWidth="2.400" />
              </CollapseArrow>
            </QueriesHead>
            <QueryItem $active>
              <GridGlyph />
              Table4
            </QueryItem>
            <QueryItem>
              <GridGlyph />
              Table6
            </QueryItem>
          </QueriesPane>

          <Centre>
            <FormulaRow>
              <FormulaButtons>
                <Cross size={18} c="#ccc" sw={2.2} />
                <CheckMark width="20" height="18" viewBox="0 0 20 18">
                  <path d="M2 9l6 7L18 1" fill="none" stroke="#ccc" strokeWidth="2.400" />
                </CheckMark>
                <FxLabel>fx</FxLabel>
              </FormulaButtons>
              <FormulaBox>
                <span>
                  = Table.SelectRows(#"Renamed Columns", <Kw $c="#4f97d7">each</Kw> ([data] {"<>"} <Kw $c="#2fb3b3">null</Kw>) and ([Column1.3name] {"<>"} <Kw $c="#2fb3b3">null</Kw>))
                </span>
                <Chevron c="#777" w={14} sw={2.500} />
              </FormulaBox>
            </FormulaRow>

            <ContentRow>
              <DataGrid>
                <Corner>
                  <GridGlyph w={16} h={14} />
                  <CornerCaret />
                </Corner>
                {columns.map((c) => (
                  <HeadCell key={c.name} $active={c.active}>
                    <TypeMark type={c.type} />
                    <HeadName>{c.name}</HeadName>
                    <FilterButton>
                      <FilterGlyph on={c.filtered} />
                    </FilterButton>
                  </HeadCell>
                ))}
                <ProfileGutter />
                {columns.map((c) => (
                  <ProfileCell key={c.name}>
                    <StatRow><Dot $c="#3aa864" />Valid<StatPct>100%</StatPct></StatRow>
                    <StatRow><Dot $c="#d69c5e" />Error<StatPct>0%</StatPct></StatRow>
                    <StatRow><Dot $c="#666" />Empty<StatPct>0%</StatPct></StatRow>
                    <Bars>
                      {c.bars.map((h, i) => (
                        <Bar key={i} style={{ height: h }} />
                      ))}
                    </Bars>
                    <Distinct>{c.distinct}</Distinct>
                  </ProfileCell>
                ))}
                {rows.map((r, i) => (
                  <React.Fragment key={i}>
                    <RowNumber>{i + 1}</RowNumber>
                    <Cell $active>{r[0]}</Cell>
                    <Cell $num>{r[1]}</Cell>
                    <Cell $num>{r[2]}</Cell>
                    <Cell $pad={7}>{r[3]}</Cell>
                  </React.Fragment>
                ))}
              </DataGrid>
              <Scrollbar>
                <ScrollEnd $h={42}>
                  <Chevron up c="#666" w={15} sw={3} />
                </ScrollEnd>
                <ScrollThumb />
                <ScrollEnd $h={319} $bottom>
                  <Chevron c="#666" w={15} sw={3} />
                </ScrollEnd>
              </Scrollbar>
            </ContentRow>
          </Centre>

          <Settings>
            <SettingsHead>
              <SettingsTitle>Query Settings</SettingsTitle>
              <Cross size={14} c="#ddd" sw={1.2} />
            </SettingsHead>
            <SectionTitle>
              <Disclosure />
              PROPERTIES
            </SectionTitle>
            <SectionBody>
              <FieldLabel>Name</FieldLabel>
              <NameInput>Table4</NameInput>
              <AllProperties>All Properties</AllProperties>
            </SectionBody>
            <SectionTitle $top={21}>
              <Disclosure />
              APPLIED STEPS
            </SectionTitle>
            <SectionBody>
              <StepList>
                {steps.map((s, i) => (
                  <StepRow key={s} $active={i === 5}>
                    <StepMark>{i === 5 && <Cross size={12} c="#eee" sw={1.800} />}</StepMark>
                    {s}
                    {i === 2 && (
                      <StepGear>
                        <Gear size={15} c="#a0a0a0" />
                      </StepGear>
                    )}
                  </StepRow>
                ))}
              </StepList>
            </SectionBody>
          </Settings>
        </Main>

        <StatusBar>
          <span>4 COLUMNS, 199+ ROWS</span>
          <StatusGap>Column profiling based on top 1000 rows</StatusGap>
          <StatusRight>PREVIEW DOWNLOADED AT 09:28 ص</StatusRight>
        </StatusBar>

        <Watermark>خمسات</Watermark>
      </Page>
    </>
  );
}
